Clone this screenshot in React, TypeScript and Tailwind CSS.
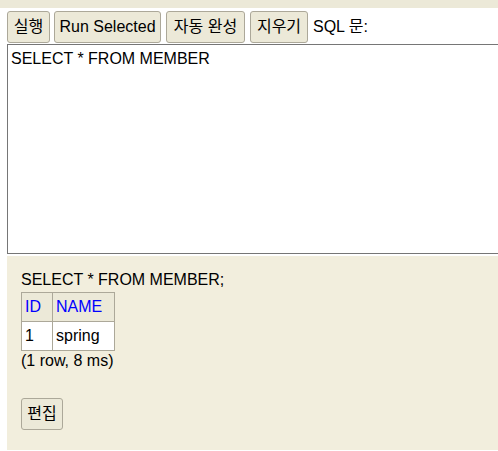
const font = "font-['Liberation_Sans','Noto_Sans_CJK_KR',sans-serif]";

function ToolButton({ label, className = "" }: { label: string; className?: string }) {
  return (
    <button
      className={`h-[32px] px-0 bg-[#ece9d8] border border-[#aca899] rounded-[3px] text-[16px] leading-[18px] text-black text-center ${className}`}
    >
      {label}
    </button>
  );
}

export default function App() {
  return (
    <div className={`min-h-[451px] bg-white ${font} text-[16px] text-black`}>
      {/* 상단 띠 */}
      <div className="h-[8px] bg-[#ece9d8]" />

      {/* 툴바 */}
      <div className="flex items-center pl-[7px] pt-[3px] pb-[1px] h-[36px]">
        <ToolButton label="실행" className="w-[43px] mr-[4px]" />
        <ToolButton label="Run Selected" className="w-[107px] mr-[5px]" />
        <ToolButton label="자동 완성" className="w-[79px] mr-[5px]" />
        <ToolButton label="지우기" className="w-[58px] mr-[5px]" />
        <span className="leading-[18px]">SQL 문:</span>
      </div>

      {/* 입력창 */}
      <div className="pl-[7px]">
        <textarea
          className="block w-[500px] h-[210px] border border-[#767676] bg-white px-[3px] pt-[5px] text-[16px] leading-[18px] resize-none outline-none"
          defaultValue="SELECT * FROM MEMBER"
          spellCheck={false}
        />
      </div>

      {/* 결과 */}
      <div className="ml-[7px] mt-[2px] h-[194px] bg-[#f2eedd] pl-[14px] pt-[15px]">
        <div className="leading-[18px]">SELECT * FROM MEMBER;</div>
        <table className="border-collapse mt-[3px]">
          <thead>
            <tr className="bg-[#ece9d8]">
              <th className="w-[31px] border border-[#aca899] px-[3px] py-[5px] font-normal text-left text-[#0000ff] leading-[18px]">ID</th>
              <th className="w-[62px] border border-[#aca899] px-[3px] py-[5px] font-normal text-left text-[#0000ff] leading-[18px]">NAME</th>
            </tr>
          </thead>
          <tbody>
            <tr className="bg-white">
              <td className="border border-[#aca899] px-[3px] py-[5px] leading-[18px]">1</td>
              <td className="border border-[#aca899] px-[3px] py-[5px] leading-[18px]">spring</td>
            </tr>
          </tbody>
        </table>
        <div className="leading-[18px] mt-[1px]">(1 row, 8 ms)</div>
        <div className="mt-[28px]">
          <ToolButton label="편집" className="w-[42px]" />
        </div>
      </div>
    </div>
  );
}
